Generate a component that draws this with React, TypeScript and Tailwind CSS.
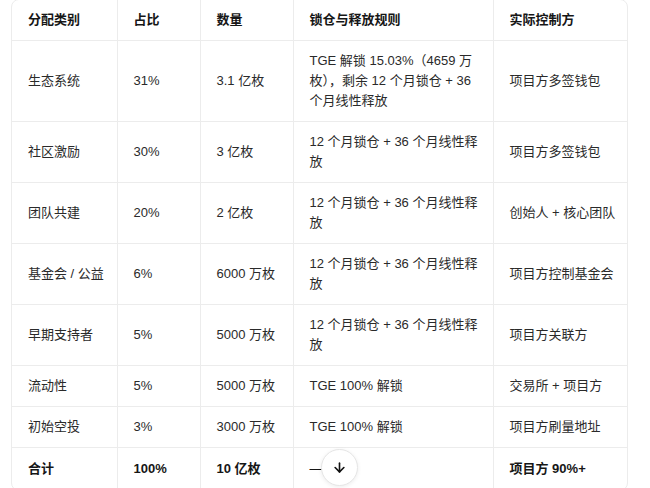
import { ArrowDown } from "lucide-react";

type Row = {
  name: string;
  share: string;
  amount: string;
  rule: string[];
  owner: string;
};

const rows: Row[] = [
  {
    name: "生态系统",
    share: "31%",
    amount: "3.1 亿枚",
    rule: ["TGE 解锁 15.03%（4659 万", "枚），剩余 12 个月锁仓 + 36", "个月线性释放"],
    owner: "项目方多签钱包",
  },
  {
    name: "社区激励",
    share: "30%",
    amount: "3 亿枚",
    rule: ["12 个月锁仓 + 36 个月线性释", "放"],
    owner: "项目方多签钱包",
  },
  {
    name: "团队共建",
    share: "20%",
    amount: "2 亿枚",
    rule: ["12 个月锁仓 + 36 个月线性释", "放"],
    owner: "创始人 + 核心团队",
  },
  {
    name: "基金会 / 公益",
    share: "6%",
    amount: "6000 万枚",
    rule: ["12 个月锁仓 + 36 个月线性释", "放"],
    owner: "项目方控制基金会",
  },
  {
    name: "早期支持者",
    share: "5%",
    amount: "5000 万枚",
    rule: ["12 个月锁仓 + 36 个月线性释", "放"],
    owner: "项目方关联方",
  },
  {
    name: "流动性",
    share: "5%",
    amount: "5000 万枚",
    rule: ["TGE 100% 解锁"],
    owner: "交易所 + 项目方",
  },
  {
    name: "初始空投",
    share: "3%",
    amount: "3000 万枚",
    rule: ["TGE 100% 解锁"],
    owner: "项目方刷量地址",
  },
];

const cell = "px-4 py-2.5 border border-[#ececec] align-middle whitespace-nowrap";

export default function App() {
  return (
    <div
      className="w-[650px] h-[488px] overflow-hidden bg-white pl-[11px] text-[13px] leading-5 text-[#2a2a2a]"
      style={{ fontFamily: '"Liberation Sans", "Noto Sans CJK SC", sans-serif' }}
    >
      <div className="relative -mt-px w-[617px] rounded-lg border border-[#ececec] overflow-hidden">
        <table className="w-full table-fixed border-collapse border-hidden">
          <colgroup>
            <col className="w-[105px]" />
            <col className="w-[83px]" />
            <col className="w-[93px]" />
            <col className="w-[200px]" />
            <col className="w-[136px]" />
          </colgroup>
          <thead>
            <tr className="text-left text-[#161616]">
              <th className={cell + " font-semibold"}>分配类别</th>
              <th className={cell + " font-semibold"}>占比</th>
              <th className={cell + " font-semibold"}>数量</th>
              <th className={cell + " font-semibold"}>锁仓与释放规则</th>
              <th className={cell + " font-semibold"}>实际控制方</th>
            </tr>
          </thead>
          <tbody>
            {rows.map((r) => (
              <tr key={r.name}>
                <td className={cell}>{r.name}</td>
                <td className={cell}>{r.share}</td>
                <td className={cell}>{r.amount}</td>
                <td className={cell}>
                  {r.rule.map((line) => (
                    <div key={line}>{line}</div>
                  ))}
                </td>
                <td className={cell}>{r.owner}</td>
              </tr>
            ))}
            <tr className="font-semibold text-[#161616]">
              <td className={cell + " py-[11px]"}>合计</td>
              <td className={cell + " py-[11px]"}>100%</td>
              <td className={cell + " py-[11px]"}>10 亿枚</td>
              <td className={cell + " py-[11px] font-normal"}>—</td>
              <td className={cell + " py-[11px]"}>项目方 90%+</td>
            </tr>
          </tbody>
        </table>
        <button
          aria-label="滚动到底部"
          className="absolute left-[309px] top-[449px] flex h-[37px] w-[37px] items-center justify-center rounded-full border border-[#e6e6e6] bg-white shadow-[0_1px_4px_rgba(0,0,0,0.08)]"
        >
          <ArrowDown className="h-[15px] w-[15px] text-[#111]" strokeWidth={2.6} />
        </button>
      </div>
    </div>
  );
}
